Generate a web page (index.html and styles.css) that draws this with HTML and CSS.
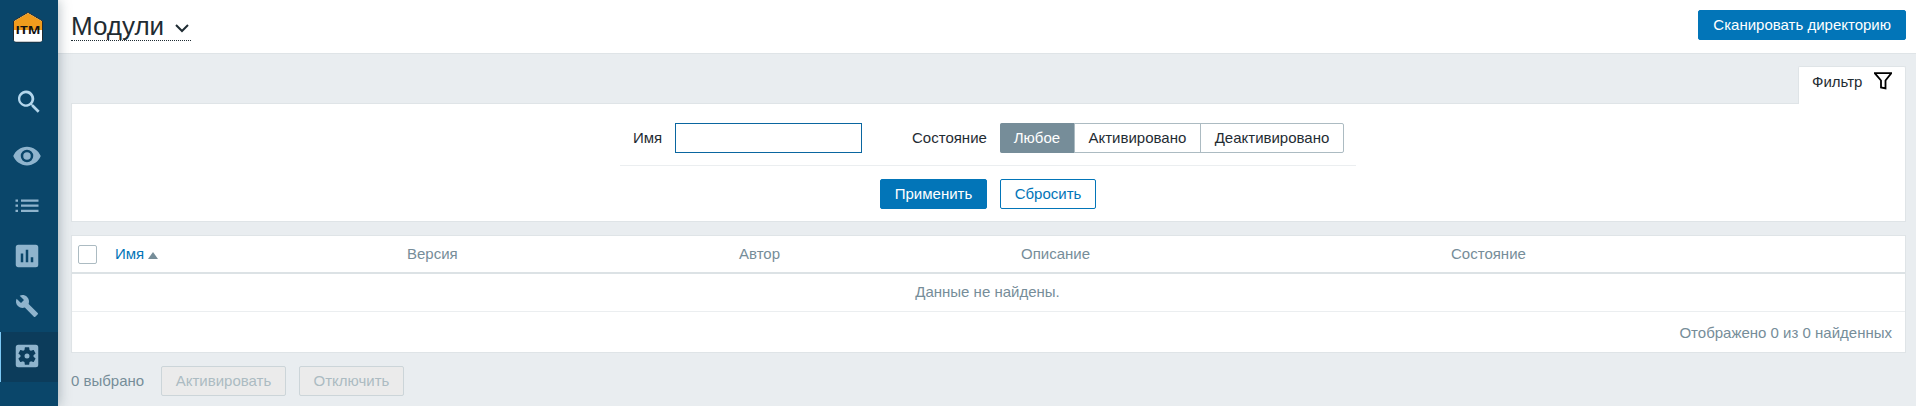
FILE: index.html
```html
<!DOCTYPE html>
<html lang="ru">
<head>
<meta charset="utf-8">
<title>Модули</title>
<link rel="stylesheet" href="styles.css">
</head>
<body>
<aside class="sidebar">
  <div class="logo">
    <svg width="32" height="32" viewBox="0 0 32 32">
      <path d="M1.500 10L16 1.500 30.500 10v19l-2 2h-25l-2-2z" fill="#fff" stroke="#222b30"/>
      <path d="M2 10.300L16 2l14 8.300V19H2z" fill="#f09c1d"/>
      <rect x="2" y="19" width="28" height="11.500" rx="1.500" fill="#fff"/>
      <text x="16" y="22.500" text-anchor="middle" textLength="25" lengthAdjust="spacingAndGlyphs">ITM</text>
    </svg>
  </div>
  <nav class="menu">
    <a class="search"><svg width="30" height="30" viewBox="0 0 24 24"><path d="M15.500 14h-.79l-.28-.27A6.500 6.500 0 1 0 13.700 14.400l.3.300v.8l5 5 1.500-1.500zm-6 0a4.500 4.500 0 1 1 0-9 4.500 4.500 0 0 1 0 9z"/></svg></a>
    <a><svg width="30" height="30" viewBox="0 0 24 24"><path d="M12 4.500C7 4.500 2.730 7.610 1 12c1.730 4.390 6 7.500 11 7.500s9.270-3.110 11-7.500c-1.730-4.390-6-7.500-11-7.500zM12 17a5 5 0 1 1 0-10 5 5 0 0 1 0 10zm0-8a3 3 0 1 0 0 6 3 3 0 0 0 0-6z"/></svg></a>
    <a><svg width="30" height="30" viewBox="0 0 30 30"><path d="M3.500 8.500H6v2.200H3.500zM9 8.500h17.500v2.200H9zM3.500 13.600H6v2.200H3.500zM9 13.600h17.500v2.200H9zM3.500 18.800H6V21H3.500zM9 18.800h17.500V21H9z"/></svg></a>
    <a><svg width="30" height="30" viewBox="0 0 24 24"><path d="M19 3H5a2 2 0 0 0-2 2v14c0 1.100.9 2 2 2h14a2 2 0 0 0 2-2V5a2 2 0 0 0-2-2zM9 17H7v-7h2zm4 0h-2V7h2zm4 0h-2v-4h2z"/></svg></a>
    <a><svg width="24" height="24" viewBox="0 0 24 24"><path d="M22.700 19l-9.100-9.100c.9-2.300.4-5-1.500-6.900-2-2-5-2.400-7.400-1.300L9 6 6 9 1.600 4.700C.4 7.100.9 10.100 2.900 12.100c1.900 1.900 4.600 2.400 6.900 1.500l9.100 9.100c.4.400 1 .4 1.400 0l2.300-2.300c.5-.4.500-1.100.1-1.400z"/></svg></a>
    <a class="active"><svg width="30" height="30" viewBox="0 0 24 24"><path d="M12 10a2 2 0 1 0 0 4 2 2 0 0 0 0-4zm7-7H5a2 2 0 0 0-2 2v14a2 2 0 0 0 2 2h14a2 2 0 0 0 2-2V5a2 2 0 0 0-2-2zm-1.750 9c0 .23-.02.46-.05.68l1.480 1.160c.13.110.17.300.08.450l-1.400 2.420c-.09.150-.27.210-.43.150l-1.740-.7c-.36.280-.76.510-1.180.690l-.26 1.850c-.03.170-.18.300-.35.300h-2.800c-.17 0-.32-.13-.35-.29l-.26-1.850c-.43-.18-.82-.41-1.180-.69l-1.740.7c-.16.060-.34 0-.43-.15l-1.400-2.420a.35.350 0 0 1 .08-.45l1.480-1.160a5.340 5.340 0 0 1 0-1.370l-1.480-1.160a.35.350 0 0 1-.08-.45l1.400-2.420c.09-.15.270-.21.430-.15l1.740.7c.36-.28.760-.51 1.180-.69l.26-1.850c.03-.17.180-.3.350-.3h2.800c.17 0 .32.130.35.290l.26 1.850c.43.180.82.410 1.180.690l1.740-.7c.16-.06.340 0 .430.150l1.400 2.420c.09.150.05.340-.08.450l-1.480 1.160c.03.230.05.460.05.690z"/></svg></a>
  </nav>
</aside>
<div class="page">
  <header class="header">
    <h1 class="title"><span>Модули</span><svg width="14" height="9" viewBox="0 0 14 9"><path d="M1 1l6 6 6-6"/></svg></h1>
    <button class="btn">Сканировать директорию</button>
  </header>
  <main class="content">
    <div class="tabs"><a class="tab">Фильтр<svg width="18" height="18" viewBox="0 0 18 18"><path d="M.8 1.200h16.400L11.500 8.500v8l-4.500-1V8.500z"/></svg></a></div>
    <section class="filter">
      <div class="fields">
        <label class="name-label" for="name">Имя</label>
        <input class="name-input" id="name" type="text">
        <span class="state-label">Состояние</span>
        <div class="segments"><span class="selected">Любое</span><span>Активировано</span><span>Деактивировано</span></div>
      </div>
      <div class="actions"><button class="btn apply">Применить</button><button class="btn alt">Сбросить</button></div>
    </section>
    <section class="list">
      <div class="row head">
        <i class="checkbox"></i>
        <span class="sorted">Имя<i class="arrow"></i></span>
        <span>Версия</span><span>Автор</span><span>Описание</span><span>Состояние</span>
      </div>
      <div class="empty">Данные не найдены.</div>
      <div class="total">Отображено 0 из 0 найденных</div>
    </section>
    <footer class="footer"><span>0 выбрано</span><button class="btn activate" disabled>Активировать</button><button class="btn disable" disabled>Отключить</button></footer>
  </main>
</div>
</body>
</html>
```
FILE: styles.css
```css
* { box-sizing: border-box; }
body {
  margin: 0;
  height: 406px;
  display: flex;
  overflow: hidden;
  background: #e9edf0;
  color: #1f2c33;
  font: 15px/18px "Liberation Sans", Arial, sans-serif;
}
.sidebar {
  position: relative;
  width: 58px;
  flex: none;
  background: #0a466a;
  box-shadow: 0 0 12px rgba(20, 45, 60, .35);
}
.logo { height: 76px; padding: 11px 0 0 12px; }
.logo svg { display: block; }
.logo text { font: bold 11px "Open Sans", sans-serif; fill: #111; }
.menu a {
  display: flex;
  align-items: center;
  justify-content: center;
  height: 50px;
  padding: 0 4px 2px 0;
}
.menu .search { height: 52px; margin-bottom: 4px; padding: 0 1px 0 0; }
.menu svg { fill: #8fb4cd; display: block; }
.menu .search svg { fill: #b3d6ec; }
.menu .active { background: #0c3c5b; box-shadow: inset 1px 0 #7bc8f5; }
.page { flex: 1; min-width: 0; }
.header {
  display: flex;
  justify-content: space-between;
  align-items: flex-start;
  height: 54px;
  padding: 10px 10px 0 13px;
  background: #fff;
  border-bottom: 1px solid #dfe4e7;
}
.title {
  display: flex;
  align-items: center;
  gap: 11px;
  width: 120px;
  height: 31px;
  margin: 0;
  padding-top: 2px;
  border-bottom: 1px dotted #1f2c33;
  font-size: 26px;
  font-weight: 400;
  line-height: 30px;
}
.title svg { flex: none; fill: none; stroke: #1f2c33; stroke-width: 2; margin-top: 4px; }
.btn {
  height: 30px;
  padding: 0 14px;
  border: 1px solid #0275b8;
  border-radius: 2px;
  background: #0275b8;
  color: #fff;
  font: inherit;
  white-space: nowrap;
}
.btn.alt { width: 96px; padding: 0; background: #fff; color: #0275b8; }
.btn.apply { width: 107px; padding: 0; }
.btn.activate { width: 125px; padding: 0; }
.btn.disable { width: 105px; padding: 0; }
.btn:disabled { background: #ebebeb; border-color: #ccd5d9; color: #acbbc2; }
.content { padding: 12px 10px 0 13px; }
.tabs { display: flex; justify-content: flex-end; height: 37px; }
.tab {
  position: relative;
  display: flex;
  gap: 12px;
  width: 108px;
  height: 38px;
  padding: 5px 0 0 13px;
  background: #fff;
  border: 1px solid #dfe4e7;
  border-bottom: 0;
  border-radius: 2px 2px 0 0;
  line-height: 20px;
}
.tab svg { fill: none; stroke: #000; stroke-width: 1.800; }
.filter {
  height: 119px;
  padding-top: 19px;
  background: #fff;
  border: 1px solid #dfe4e7;
}
.fields {
  display: flex;
  align-items: center;
  width: 736px;
  height: 43px;
  margin: 0 0 0 548px;
  padding: 0 12px 12px 13px;
  border-bottom: 1px solid #ebeef0;
}
.name-label { width: 42px; }
.name-input { width: 187px; height: 30px; border: 1px solid #0a66a0; padding: 0; outline: 0; }
.state-label { width: 88px; margin-left: 50px; }
.segments { display: flex; width: 344px; height: 30px; border: 1px solid #acbbc2; border-radius: 2px; }
.segments span { flex: auto; text-align: center; line-height: 28px; }
.segments span + span { border-left: 1px solid #acbbc2; }
.segments .selected { background: #768d99; color: #fff; margin: -1px 0 -1px -1px; line-height: 30px; border-radius: 2px 0 0 2px; }
.actions { display: flex; gap: 13px; padding: 13px 0 0 808px; }
.list { margin-top: 13px; height: 118px; background: #fff; border: 1px solid #dfe4e7; color: #768d99; }
.row {
  display: grid;
  grid-template-columns: 43px 292px 332px 282px 430px 1fr;
  align-items: center;
  height: 38px;
  border-bottom: 2px solid #dce2e5;
}
.checkbox { width: 19px; height: 19px; margin-left: 6px; border: 1px solid #acbbc2; border-radius: 2px; }
.sorted { color: #0275b8; display: flex; align-items: center; }
.arrow { margin: 3px 0 0 4px; border: 5px solid transparent; border-top: 0; border-bottom: 7px solid #768d99; }
.empty { height: 38px; padding-right: 2px; text-align: center; line-height: 36px; border-bottom: 1px solid #ebeef0; }
.total { text-align: right; padding-right: 13px; line-height: 41px; }
.footer { display: flex; align-items: center; margin-top: 13px; color: #768d99; }
.footer span { width: 90px; }
.footer .btn + .btn { margin-left: 13px; }
```
